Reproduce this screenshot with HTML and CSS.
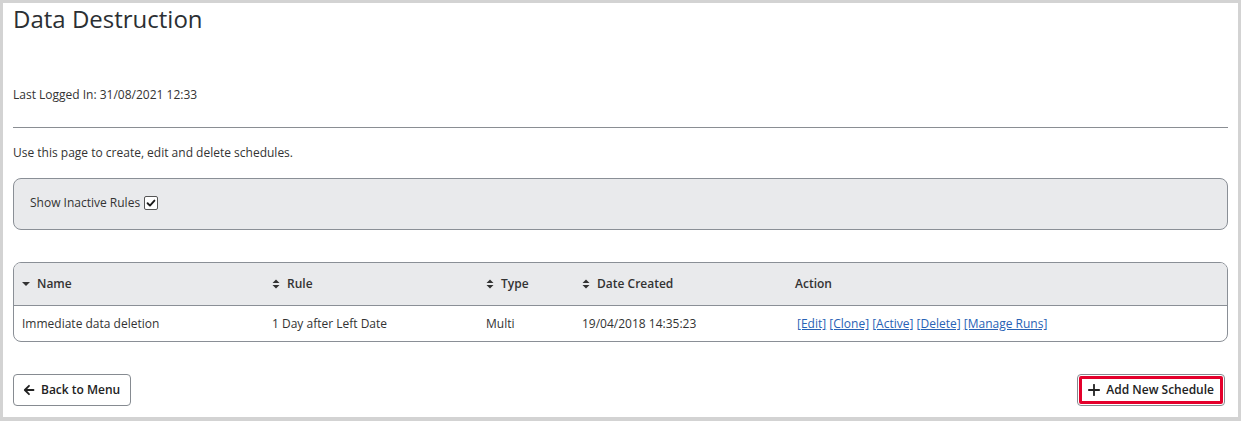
FILE: index.html
```html
<!DOCTYPE html>
<html lang="en">
<head>
<meta charset="utf-8">
<title>Data Destruction</title>
<link rel="stylesheet" href="styles.css">
</head>
<body>
<div class="page">
  <h1 class="title">Data Destruction</h1>
  <p class="last-login">Last Logged In: 31/08/2021 12:33</p>
  <hr class="rule">
  <p class="intro">Use this page to create, edit and delete schedules.</p>

  <div class="filter-panel">
    <label class="filter-label">Show Inactive Rules
      <span class="checkbox"><svg viewBox="0 0 14 14" width="14" height="14"><path d="M3 7.3 L5.8 10 L11 4.2" fill="none" stroke="#1a1a1a" stroke-width="2.2" stroke-linecap="round" stroke-linejoin="round"/></svg></span>
    </label>
  </div>

  <div class="table-wrap">
    <table class="grid">
      <colgroup>
        <col class="c-name"><col class="c-rule"><col class="c-type"><col class="c-date"><col class="c-action">
      </colgroup>
      <thead>
        <tr>
          <th><span class="sort"><svg viewBox="0 0 8 10" width="8" height="10"><path d="M0 3 L8 3 L4 7 Z" fill="#333"/></svg></span>Name</th>
          <th><span class="sort"><svg viewBox="0 0 8 10" width="8" height="10"><path d="M0.5 4 L7.5 4 L4 0.5 Z M0.5 6 L7.5 6 L4 9.5 Z" fill="#333"/></svg></span>Rule</th>
          <th><span class="sort"><svg viewBox="0 0 8 10" width="8" height="10"><path d="M0.5 4 L7.5 4 L4 0.5 Z M0.5 6 L7.5 6 L4 9.5 Z" fill="#333"/></svg></span>Type</th>
          <th><span class="sort"><svg viewBox="0 0 8 10" width="8" height="10"><path d="M0.5 4 L7.5 4 L4 0.5 Z M0.5 6 L7.5 6 L4 9.5 Z" fill="#333"/></svg></span>Date Created</th>
          <th>Action</th>
        </tr>
      </thead>
      <tbody>
        <tr>
          <td>Immediate data deletion</td>
          <td>1 Day after Left Date</td>
          <td>Multi</td>
          <td>19/04/2018 14:35:23</td>
          <td class="actions"><a href="#">[Edit]</a> <a href="#">[Clone]</a> <a href="#">[Active]</a> <a href="#">[Delete]</a> <a href="#">[Manage Runs]</a></td>
        </tr>
      </tbody>
    </table>
  </div>

  <div class="footer-bar">
    <a href="#" class="btn"><svg viewBox="0 0 12 12" width="12" height="12"><path d="M10.5 6 H2 M6 1.8 L1.8 6 L6 10.2" fill="none" stroke="#222" stroke-width="1.8" stroke-linecap="round" stroke-linejoin="round"/></svg>Back to Menu</a>
    <a href="#" class="btn btn-focus"><svg viewBox="0 0 12 12" width="12" height="12"><path d="M6 0.8 V11.2 M0.8 6 H11.2" fill="none" stroke="#222" stroke-width="1.8" stroke-linecap="round"/></svg>Add New Schedule</a>
  </div>
</div>
</body>
</html>
```

FILE: styles.css
```css
html {
  background: #d3d3d3;
}
body {
  margin: 0;
  font-family: "Open Sans", "Noto Sans", "Liberation Sans", sans-serif;
  font-size: 12px;
  line-height: 18px;
  color: #333;
}
.page {
  margin: 3px 3px 4px 3px;
  height: 414px;
  box-sizing: border-box;
  background: #fff;
  padding: 0 10px 11px 10px;
  display: flex;
  flex-direction: column;
}
.title {
  margin: 0;
  font-size: 24px;
  line-height: 32px;
  font-weight: 400;
  color: #2b2f33;
}
.last-login {
  margin: 51px 0 0;
}
.rule {
  margin: 23px 0 0;
  border: 0;
  border-top: 1px solid #8a8e93;
  height: 0;
}
.intro {
  margin: 16px 0 0;
}
.filter-panel {
  margin-top: 16px;
  background: #e9eaec;
  border: 1px solid #8a8f96;
  border-radius: 8px;
  padding: 15px 16px 17px;
}
.filter-label {
  display: inline-flex;
  align-items: center;
  gap: 4px;
}
.checkbox {
  display: inline-flex;
  width: 14px;
  height: 14px;
  box-sizing: border-box;
  border: 1px solid #555;
  border-radius: 2px;
  background: #fff;
  align-items: center;
  justify-content: center;
}
.checkbox svg {
  width: 12px;
  height: 12px;
}
.table-wrap {
  margin-top: 32px;
  border: 1px solid #8a8f96;
  border-radius: 8px;
  overflow: hidden;
}
.grid {
  width: 100%;
  border-collapse: collapse;
  table-layout: fixed;
}
.c-name { width: 250px; }
.c-rule { width: 214px; }
.c-type { width: 96px; }
.c-date { width: 213px; }
.grid th {
  background: #e9eaec;
  text-align: left;
  font-weight: 600;
  height: 42px;
  padding: 0 8px;
  border-bottom: 1px solid #8a8f96;
  color: #333;
}
.grid td {
  height: 35px;
  padding: 0 8px 1px;
}
.sort {
  display: inline-block;
  width: 8px;
  margin-right: 7px;
  vertical-align: -1px;
}
.sort svg {
  display: block;
}
.actions {
  padding-left: 10px !important;
}
.actions a {
  color: #2862b5;
  text-decoration: underline;
}
.footer-bar {
  margin-top: 32px;
  display: flex;
  justify-content: space-between;
  align-items: center;
}
.btn {
  display: inline-flex;
  align-items: center;
  gap: 6px;
  height: 32px;
  box-sizing: border-box;
  padding: 0 10px 0 9px;
  border: 1px solid #868b91;
  border-radius: 4px;
  background: #fff;
  color: #222;
  text-decoration: none;
  font-weight: 600;
}
.btn-focus {
  margin-right: 3px;
  padding: 0 10px 0 10px;
  outline: 3px solid #e4002b;
  outline-offset: -5px;
}
```
